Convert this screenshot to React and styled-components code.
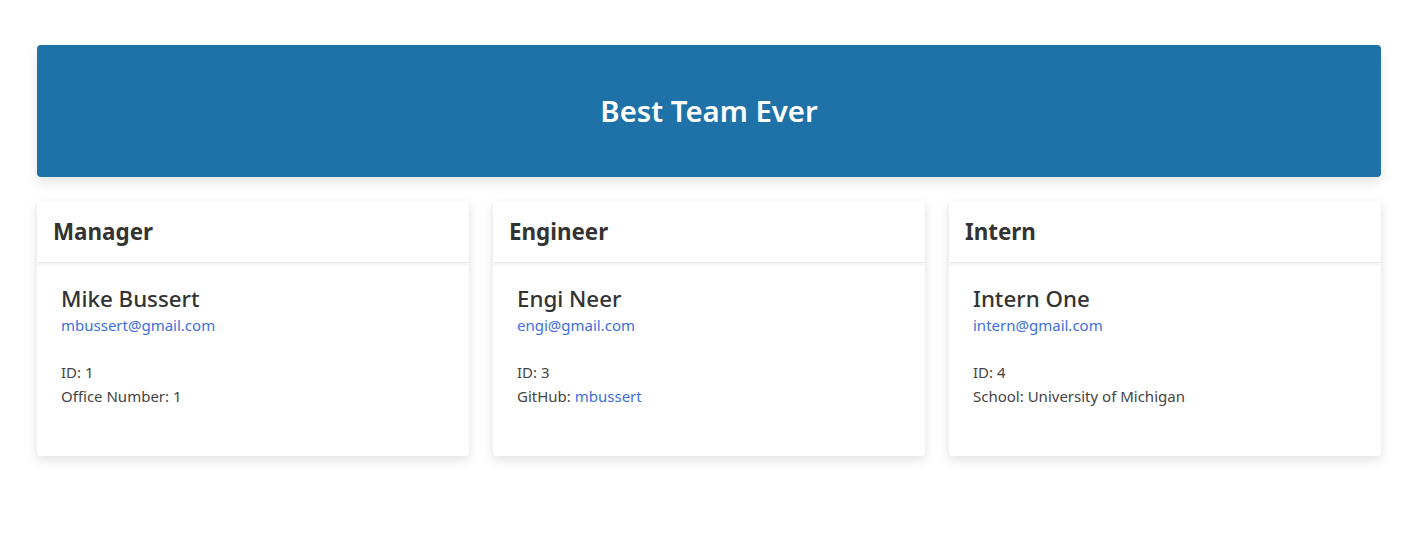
import React from 'react';
import styled, { createGlobalStyle } from 'styled-components';

const GlobalStyle = createGlobalStyle`
body {
  margin: 0;
  background: #ffffff;
  font-family: "Noto Sans", "Open Sans", sans-serif;
  color: #333333;
}
`;

const Page = styled.div`
padding: 45px 37px 40px;
`;

const Banner = styled.header`
height: 132px;
background: #1e72a8;
border-radius: 4px;
box-shadow: 0 6px 12px rgba(0, 0, 0, 0.1);
display: flex;
align-items: center;
justify-content: center;
margin-bottom: 24px;
`;

const BannerTitle = styled.h1`
margin: 0;
color: #ffffff;
font-size: 29.3px;
font-weight: 600;
`;

const CardGrid = styled.div`
display: grid;
grid-template-columns: repeat(3, 1fr);
gap: 24px;
`;

const Card = styled.section`
height: 255px;
background: #ffffff;
border-radius: 4px;
box-shadow: 0 4px 12px rgba(0, 0, 0, 0.12);
display: flex;
flex-direction: column;
`;

const CardHeader = styled.div`
height: 61px;
padding: 0 16px;
display: flex;
align-items: center;
border-bottom: 1px solid #ececec;
box-shadow: 0 2px 3px rgba(0, 0, 0, 0.05);
`;

const Role = styled.h2`
margin: 0;
font-size: 22.4px;
font-weight: 700;
color: #333333;
`;

const CardBody = styled.div`
padding: 21px 24px 0;
`;

const Name = styled.h3`
margin: 0;
font-size: 22.3px;
font-weight: 500;
color: #333333;
line-height: 30px;
`;

const Email = styled.a`
display: block;
font-size: 15px;
line-height: 22px;
color: #3d6fe0;
text-decoration: none;
margin-bottom: 24px;
`;

const Line = styled.p`
margin: 0;
font-size: 15px;
line-height: 24px;
color: #444444;
`;

const Link = styled.a`
color: #3d6fe0;
text-decoration: none;
`;

const team = [
  { role: 'Manager', name: 'Mike Bussert', email: 'mbussert@gmail.com', id: 1, label: 'Office Number', value: '1' },
  { role: 'Engineer', name: 'Engi Neer', email: 'engi@gmail.com', id: 3, label: 'GitHub', value: 'mbussert', link: true },
  { role: 'Intern', name: 'Intern One', email: 'intern@gmail.com', id: 4, label: 'School', value: 'University of Michigan' },
];

export default function App() {
  return (
    <>
      <GlobalStyle />
      <Page>
        <Banner>
          <BannerTitle>Best Team Ever</BannerTitle>
        </Banner>
        <CardGrid>
          {team.map((m) => (
            <Card key={m.role}>
              <CardHeader>
                <Role>{m.role}</Role>
              </CardHeader>
              <CardBody>
                <Name>{m.name}</Name>
                <Email href={`mailto:${m.email}`}>{m.email}</Email>
                <Line>ID: {m.id}</Line>
                <Line>
                  {m.label}: {m.link ? <Link href="#">{m.value}</Link> : m.value}
                </Line>
              </CardBody>
            </Card>
          ))}
        </CardGrid>
      </Page>
    </>
  );
}
